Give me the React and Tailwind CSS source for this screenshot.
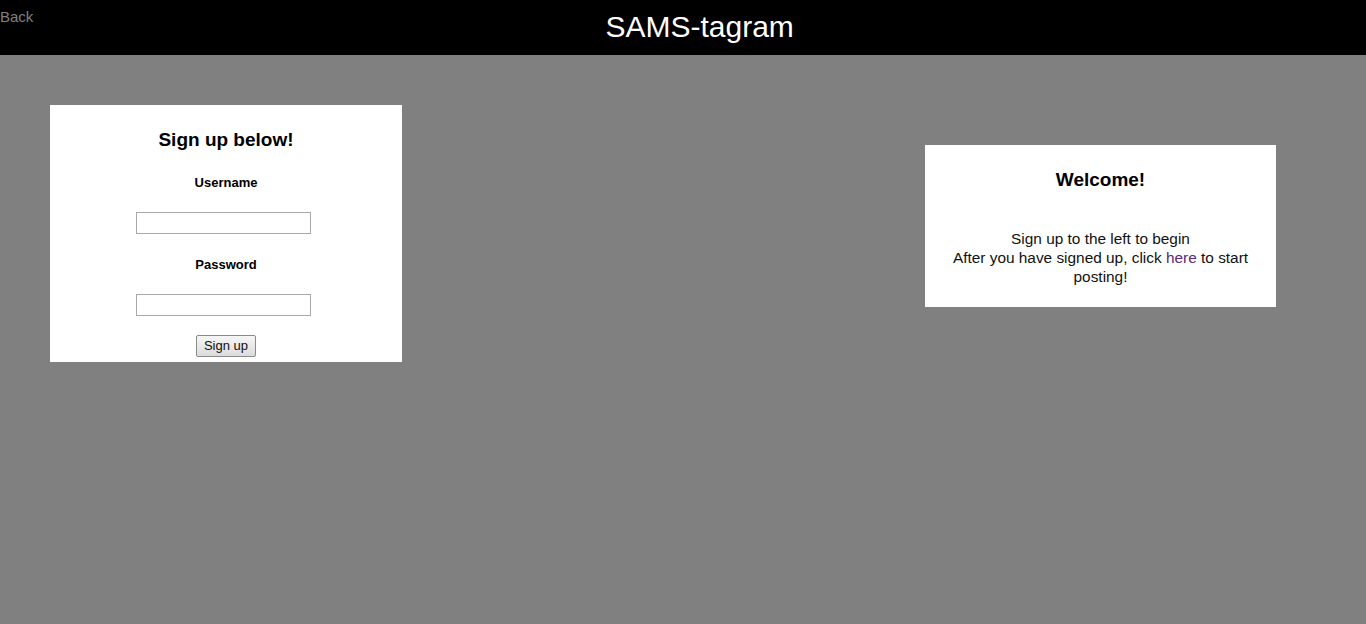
export default function App() {
  const font = { fontFamily: '"Liberation Sans", Arial, sans-serif' };
  return (
    <div className="min-h-[624px] w-full bg-[#808080]" style={font}>
      <header className="flex h-[55px] bg-black">
        <a href="#" className="self-start text-[15px] leading-[34px] text-[#808080]">Back</a>
        <h1 className="flex-1 text-center text-[30px] leading-[54px] text-white">SAMS-tagram</h1>
      </header>
      <div className="flex justify-between pl-[50px] pr-[90px]">
        <div className="mt-[50px] flex h-[257px] w-[352px] flex-col items-center bg-white pt-[23px]">
          <h2 className="text-[19px] font-bold leading-[24px] text-black">Sign up below!</h2>
          <label className="mt-[23px] text-[13px] font-bold leading-[15px] text-black">Username</label>
          <input type="text" className="mr-[5px] mt-[22px] h-[22px] w-[175px] border border-[#a9a9a9] bg-white" />
          <label className="mt-[23px] text-[13px] font-bold leading-[15px] text-black">Password</label>
          <input type="password" className="mr-[5px] mt-[22px] h-[22px] w-[175px] border border-[#a9a9a9] bg-white" />
          <button className="mt-[19px] h-[22px] w-[60px] rounded-[2px] border border-[#8a8a8a] bg-gradient-to-b from-[#f6f6f6] to-[#dcdcdc] text-[13px] leading-[20px] text-[#111]">Sign up</button>
        </div>
        <div className="mt-[90px] flex h-[162px] w-[351px] flex-col items-center bg-white px-[10px] pt-[23px] text-center">
          <h2 className="text-[19px] font-bold leading-[24px] text-black">Welcome!</h2>
          <p className="mt-[37px] text-[15.4px] leading-[19px] text-[#111]">
            Sign up to the left to begin
            <br />
            After you have signed up, click <a href="#" className="text-[#5a2a7a]">here</a> to start posting!
          </p>
        </div>
      </div>
    </div>
  );
}
